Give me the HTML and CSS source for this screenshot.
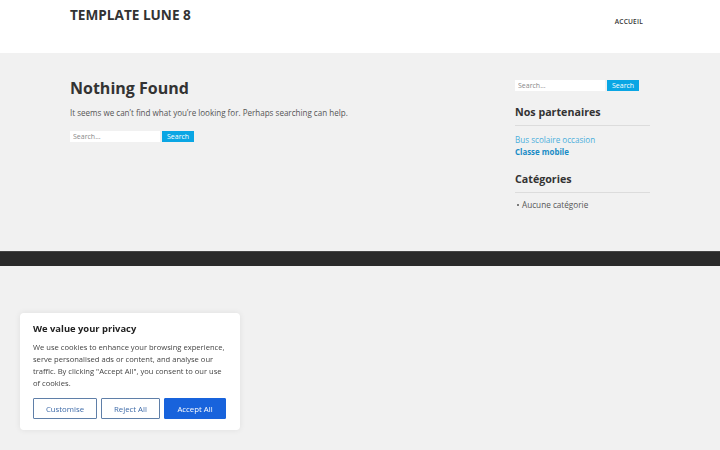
FILE: index.html
```html
<!DOCTYPE html>
<html lang="fr">
<head>
<meta charset="utf-8">
<title>Template Lune 8</title>
<link rel="stylesheet" href="styles.css">
</head>
<body>
<header class="site-header">
  <div class="container header-inner">
    <div class="site-title">TEMPLATE LUNE 8</div>
    <nav class="main-nav"><a href="#" class="nav-link">ACCUEIL</a></nav>
  </div>
</header>
<div class="site-content">
  <div class="container content-grid">
    <main class="main-col">
      <h1 class="page-title">Nothing Found</h1>
      <p class="lead">It seems we can’t find what you’re looking for. Perhaps searching can help.</p>
      <form class="search-form">
        <input class="search-field" type="search" placeholder="Search...">
        <button class="search-submit" type="button">Search</button>
      </form>
    </main>
    <aside class="sidebar">
      <form class="search-form">
        <input class="search-field" type="search" placeholder="Search...">
        <button class="search-submit" type="button">Search</button>
      </form>
      <section class="widget">
        <h2 class="widget-title">Nos partenaires</h2>
        <div class="links">
          <a href="#" class="link">Bus scolaire occasion</a>
          <a href="#" class="link link-bold">Classe mobile</a>
        </div>
      </section>
      <section class="widget">
        <h2 class="widget-title">Catégories</h2>
        <ul class="cat-list"><li>Aucune catégorie</li></ul>
      </section>
    </aside>
  </div>
</div>
<footer class="site-footer"></footer>

<div class="cookie-box">
  <div class="cookie-title">We value your privacy</div>
  <p class="cookie-text">We use cookies to enhance your browsing experience, serve personalised ads or content, and analyse our traffic. By clicking "Accept All", you consent to our use of cookies.</p>
  <div class="cookie-buttons">
    <button class="cbtn cbtn-outline cbtn-custom" type="button">Customise</button>
    <button class="cbtn cbtn-outline cbtn-reject" type="button">Reject All</button>
    <button class="cbtn cbtn-accept" type="button">Accept All</button>
  </div>
</div>
</body>
</html>
```
FILE: styles.css
```css
* { box-sizing: border-box; }
html, body { margin: 0; padding: 0; }
body {
  background: #f1f1f1;
  font-family: "Open Sans", "Noto Sans", sans-serif;
  color: #555;
  font-size: 8px;
  height: 450px;
  overflow: hidden;
}
.container { width: 580px; margin: 0 auto; }

.site-header { background: #fff; height: 53px; }
.header-inner { display: flex; justify-content: space-between; align-items: flex-start; }
.site-title {
  font-size: 13.6px; font-weight: bold; color: #333;
  padding-top: 7px; line-height: 16px;
}
.main-nav { padding-top: 18px; padding-right: 7px; }
.nav-link {
  font-size: 6.6px; color: #333; text-decoration: none; letter-spacing: 0.2px;
  line-height: 8px; display: block; font-weight: 600;
}

.site-content { height: 198px; padding-top: 24px; }
.content-grid { display: grid; grid-template-columns: 1fr 135px; gap: 20px; }

.page-title {
  margin: 0; font-size: 16px; font-weight: bold; color: #333; line-height: 22px;
}
.lead { margin: 8px 0 0; font-size: 8.05px; line-height: 12px; color: #555; }

.search-form { display: flex; gap: 2px; align-items: stretch; }
.main-col .search-form { margin-top: 12px; }
.search-field {
  width: 90px; height: 11px; border: none; background: #fff; padding: 0 3px;
  font-family: inherit; font-size: 7px; color: #777; outline: none;
}
.search-field::placeholder { color: #888; }
.search-submit {
  height: 11px; padding: 0 5px; border: none; background: #0aa6e4; color: #fff;
  font-family: inherit; font-size: 7px; line-height: 11px;
}

.sidebar { padding-top: 3px; }
.widget { margin-top: 14px; }
.widget-title {
  margin: 0; font-size: 10.7px; font-weight: bold; color: #333; line-height: 14px;
  padding-bottom: 6px; border-bottom: 1px solid #dcdcdc;
}
.links { padding-top: 8px; display: flex; flex-direction: column; }
.link { color: #4aaedc; text-decoration: none; font-size: 8.1px; line-height: 12px; }
.link-bold { color: #1a8cc6; font-weight: bold; font-size: 7.9px; }
.cat-list { margin: 6px 0 0; padding-left: 2px; list-style: none; }
.cat-list li { font-size: 8.2px; line-height: 12px; color: #555; display: flex; align-items: center; gap: 3px; }
.cat-list li::before { content: ""; width: 2px; height: 2px; background: #555; border-radius: 50%; }

.site-footer { background: #2a2a2a; height: 15px; border-top: 1px solid #444; }

.cookie-box {
  position: fixed; left: 20px; bottom: 20px; width: 220px;
  background: #fff; border-radius: 4px; padding: 10px 13px 11px;
  box-shadow: 0 0 6px rgba(0,0,0,0.08);
}
.cookie-title { font-size: 9.4px; font-weight: bold; color: #212121; line-height: 12px; }
.cookie-text { margin: 6px 0 0; font-size: 7.6px; line-height: 12px; color: #444; }
.cookie-buttons { display: flex; gap: 4px; margin-top: 9px; }
.cbtn {
  height: 21px; font-family: inherit; font-size: 7.8px; border-radius: 1px;
  padding: 0; background: #fff;
}
.cbtn-outline { border: 1.5px solid #5f7fa8; color: #3d6aa8; }
.cbtn-custom { width: 64px; }
.cbtn-reject { width: 59px; }
.cbtn-accept { width: 62px; border: 1.5px solid #1863dc; background: #1863dc; color: #fff; }
```
